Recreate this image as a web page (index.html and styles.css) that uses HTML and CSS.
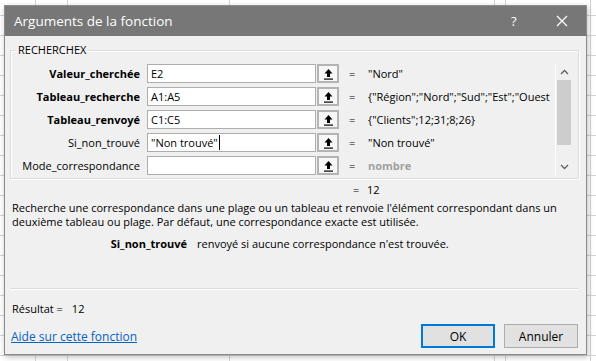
FILE: index.html
```html
<!DOCTYPE html>
<html lang="fr">
<head>
  <meta charset="UTF-8">
  <meta name="viewport" content="width=device-width, initial-scale=1.0">
  <title>Arguments de la fonction</title>
  <link rel="stylesheet" href="styles.css">
</head>
<body>
  <div class="dialog">
    <div class="titlebar">
      <span class="title">Arguments de la fonction</span>
      <span class="help">?</span>
      <span class="close">
        <svg width="12" height="12" viewBox="0 0 12 12"><path d="M1 1 L11 11 M11 1 L1 11" stroke="#fff" stroke-width="1.2" fill="none"/></svg>
      </span>
    </div>

    <div class="content">
      <fieldset class="group">
        <legend>RECHERCHEX</legend>
        <div class="args">
          <div class="rows">
            <div class="row">
              <span class="label req">Valeur_cherchée</span>
              <span class="input">E2</span>
              <span class="ref"><svg width="11" height="12" viewBox="0 0 11 12"><path d="M5.5 1 L1.5 5.5 H4 V9 H7 V5.5 H9.5 Z" fill="#000"/><rect x="1" y="10.5" width="9" height="1.2" fill="#000"/></svg></span>
              <span class="eq">=</span>
              <span class="val">"Nord"</span>
            </div>
            <div class="row">
              <span class="label req">Tableau_recherche</span>
              <span class="input">A1:A5</span>
              <span class="ref"><svg width="11" height="12" viewBox="0 0 11 12"><path d="M5.5 1 L1.5 5.5 H4 V9 H7 V5.5 H9.5 Z" fill="#000"/><rect x="1" y="10.5" width="9" height="1.2" fill="#000"/></svg></span>
              <span class="eq">=</span>
              <span class="val">{"Région";"Nord";"Sud";"Est";"Ouest</span>
            </div>
            <div class="row">
              <span class="label req">Tableau_renvoyé</span>
              <span class="input">C1:C5</span>
              <span class="ref"><svg width="11" height="12" viewBox="0 0 11 12"><path d="M5.5 1 L1.5 5.5 H4 V9 H7 V5.5 H9.5 Z" fill="#000"/><rect x="1" y="10.5" width="9" height="1.2" fill="#000"/></svg></span>
              <span class="eq">=</span>
              <span class="val">{"Clients";12;31;8;26}</span>
            </div>
            <div class="row">
              <span class="label">Si_non_trouvé</span>
              <span class="input"><span class="caret">"Non trouvé"</span></span>
              <span class="ref"><svg width="11" height="12" viewBox="0 0 11 12"><path d="M5.5 1 L1.5 5.5 H4 V9 H7 V5.5 H9.5 Z" fill="#000"/><rect x="1" y="10.5" width="9" height="1.2" fill="#000"/></svg></span>
              <span class="eq">=</span>
              <span class="val">"Non trouvé"</span>
            </div>
            <div class="row">
              <span class="label">Mode_correspondance</span>
              <span class="input"></span>
              <span class="ref"><svg width="11" height="12" viewBox="0 0 11 12"><path d="M5.5 1 L1.5 5.5 H4 V9 H7 V5.5 H9.5 Z" fill="#000"/><rect x="1" y="10.5" width="9" height="1.2" fill="#000"/></svg></span>
              <span class="eq">=</span>
              <span class="val hint">nombre</span>
            </div>
          </div>
          <div class="scrollbar">
            <span class="arrow"><svg width="9" height="6" viewBox="0 0 9 6"><path d="M1 5 L4.5 1.5 L8 5" stroke="#606060" stroke-width="1.3" fill="none"/></svg></span>
            <span class="thumb"></span>
            <span class="arrow"><svg width="9" height="6" viewBox="0 0 9 6"><path d="M1 1 L4.5 4.5 L8 1" stroke="#606060" stroke-width="1.3" fill="none"/></svg></span>
          </div>
        </div>
      </fieldset>

      <div class="formula"><span class="eq">=</span><span class="val">12</span></div>

      <p class="desc">Recherche une correspondance dans une plage ou un tableau et renvoie l'élément correspondant dans un deuxième tableau ou plage. Par défaut, une correspondance exacte est utilisée.</p>

      <p class="argdesc"><b>Si_non_trouvé</b><span>renvoyé si aucune correspondance n'est trouvée.</span></p>

      <div class="sep"></div>

      <div class="result">Résultat =<span>12</span></div>

      <div class="footer">
        <a href="#">Aide sur cette fonction</a>
        <div class="buttons">
          <button class="btn ok">OK</button>
          <button class="btn">Annuler</button>
        </div>
      </div>
    </div>
  </div>
</body>
</html>
```

FILE: styles.css
```css
body {
  margin: 0;
  height: 361px;
  overflow: hidden;
  font-family: "Open Sans", "Liberation Sans", sans-serif;
  font-size: 11px;
  color: #000;
  background-color: #fff;
  /* grille du tableur derriere la boite */
  background-image:
    linear-gradient(#d4d4d4, #d4d4d4),
    linear-gradient(#d4d4d4, #d4d4d4),
    linear-gradient(#d4d4d4, #d4d4d4),
    linear-gradient(#d4d4d4, #d4d4d4),
    linear-gradient(#d4d4d4, #d4d4d4),
    linear-gradient(#d4d4d4, #d4d4d4),
    repeating-linear-gradient(to bottom, transparent 0, transparent 19px, #d4d4d4 19px, #d4d4d4 20px);
  background-size: 1px 100%, 1px 100%, 1px 100%, 1px 100%, 1px 100%, 1px 100%, 100% 100%;
  background-position: 35px 0, 67px 0, 229px 0, 494px 0, 505px 0, 590px 0, 0 -4px;
  background-repeat: no-repeat;
}

.dialog {
  margin: 5px 0 0 4px;
  width: 583px;
  height: 350px;
  box-sizing: border-box;
  background: #f0f0f0;
  border: 1px solid #8c8c8c;
  box-shadow: 1px 2px 6px rgba(0, 0, 0, 0.25);
}

/* Barre de titre */
.titlebar {
  height: 30px;
  background: #777;
  color: #fff;
  display: flex;
  align-items: center;
  padding-left: 9px;
  padding-right: 9px;
}

.titlebar .title {
  font-size: 13.5px;
  flex: 1;
}

.titlebar .help {
  font-size: 13px;
  width: 14px;
  margin-right: 22px;
}

.titlebar .close {
  width: 30px;
  display: flex;
  justify-content: center;
}

.content {
  padding: 6px 8px 0 5px;
}

/* Groupe des arguments */
.group {
  margin: 0;
  padding: 6px 6px 3px 0;
  border: 1px solid #dcdcdc;
  box-shadow: inset 1px 1px 0 #fff, 1px 1px 0 #fff;
}

.group legend {
  margin-left: 5px;
  padding: 0 2px;
  line-height: 16px;
}

.args {
  display: flex;
}

.rows {
  width: 542px;
  overflow: hidden;
  display: flex;
  flex-direction: column;
  gap: 4px;
}

.row {
  display: flex;
  align-items: center;
  height: 19px;
  white-space: nowrap;
}

.label {
  width: 129px;
  flex-shrink: 0;
  text-align: right;
}

.label.req {
  font-weight: bold;
}

.input {
  margin-left: 7px;
  width: 169px;
  height: 19px;
  box-sizing: border-box;
  flex-shrink: 0;
  background: #fff;
  border: 1px solid #adadad;
  padding-left: 3px;
  line-height: 17px;
}

.caret {
  border-right: 1px solid #000;
  padding-right: 1px;
}

.ref {
  margin-left: 1px;
  width: 22px;
  height: 19px;
  box-sizing: border-box;
  flex-shrink: 0;
  background: #f7f7f7;
  border: 2px solid #b4b4b4;
  display: flex;
  align-items: center;
  justify-content: center;
}

.eq {
  margin-left: 10px;
  width: 8px;
  flex-shrink: 0;
}

.val {
  margin-left: 11px;
}

.val.hint {
  color: #a0a0a0;
  font-weight: bold;
}

.scrollbar {
  margin-left: 2px;
  width: 16px;
  height: 111px;
  display: flex;
  flex-direction: column;
  align-items: center;
  border-left: 1px solid #fff;
}

.scrollbar .arrow {
  height: 16px;
  display: flex;
  align-items: center;
  justify-content: center;
}

.scrollbar .thumb {
  width: 14px;
  height: 65px;
  background: #cdcdcd;
}

.scrollbar .thumb + .arrow {
  margin-top: auto;
}

/* Textes sous le groupe */
.formula {
  margin-top: 4px;
  padding-left: 343px;
  line-height: 14px;
  display: flex;
}

.formula .eq {
  margin-left: 0;
}

.formula .val {
  margin-left: 6px;
}

.desc {
  margin: 4px 0 0;
  padding-left: 2px;
  line-height: 14px;
  width: 565px;
}

.argdesc {
  margin: 8px 0 0;
  line-height: 14px;
  display: flex;
}

.argdesc b {
  width: 177px;
  text-align: right;
}

.argdesc span {
  margin-left: 10px;
}

.sep {
  margin-top: 37px;
  height: 1px;
  background: #dcdcdc;
  border-bottom: 1px solid #fff;
}

.result {
  margin-top: 12px;
  padding-left: 2px;
  line-height: 14px;
}

.result span {
  margin-left: 9px;
}

.footer {
  margin-top: 8px;
  display: flex;
  align-items: center;
  justify-content: space-between;
  padding-left: 1px;
}

.footer a {
  color: #0563c1;
  text-decoration: underline;
  font-size: 12px;
}

.buttons {
  display: flex;
  gap: 9px;
}

.btn {
  font-family: inherit;
  font-size: 12px;
  width: 74px;
  height: 24px;
  background: #e1e1e1;
  border: 1px solid #adadad;
  color: #000;
  padding: 0;
}

.btn.ok {
  border: 2px solid #0078d7;
}
```
